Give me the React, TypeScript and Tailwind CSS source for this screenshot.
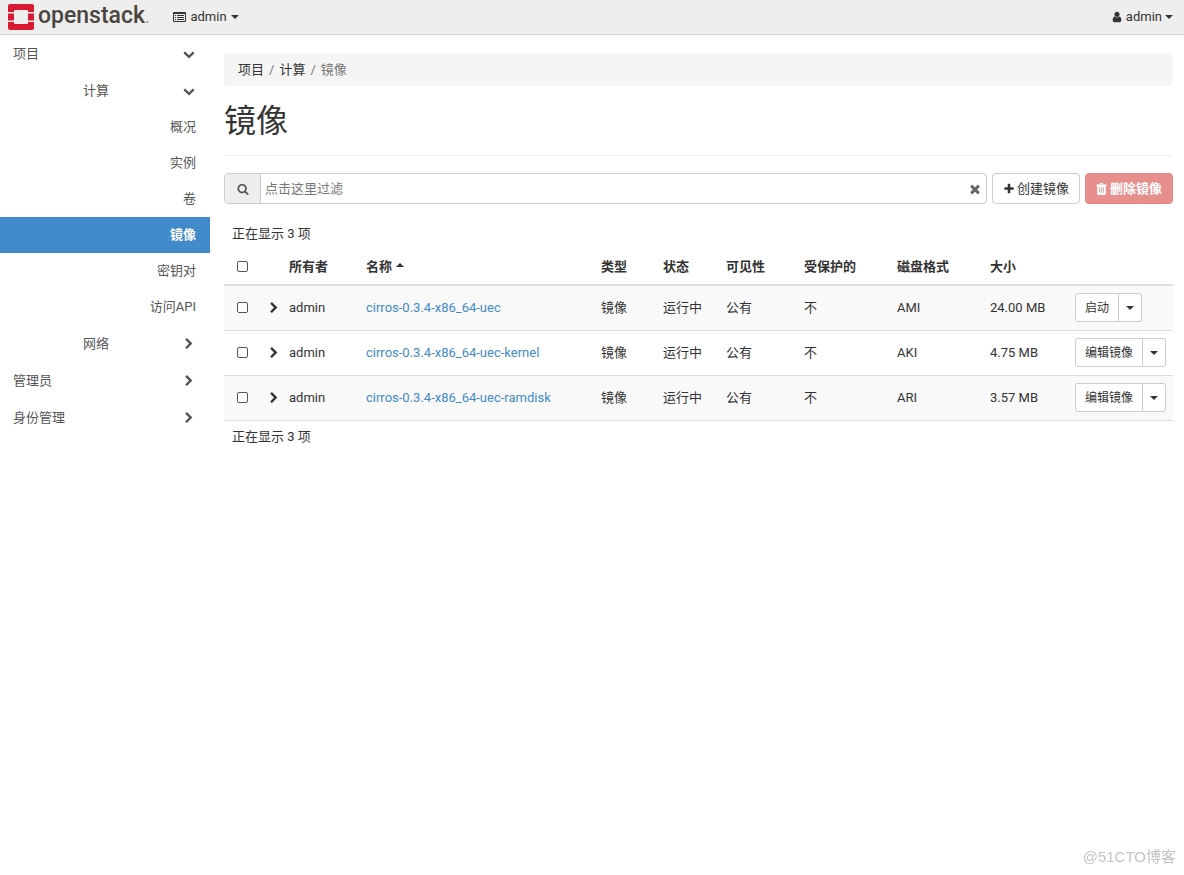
import type { ReactNode } from "react";

const CHEVRON_RIGHT =
    "M1363 877l-742 742q-19 19-45 19t-45-19l-166-166q-19-19-19-45t19-45l531-531-531-531q-19-19-19-45t19-45l166-166q19-19 45-19t45 19l742 742q19 19 19 45t-19 45z";
const CHEVRON_DOWN =
    "M1683 808l-742 741q-19 19-45 19t-45-19l-742-741q-19-19-19-45.5t19-45.5l166-165q19-19 45-19t45 19l531 531 531-531q19-19 45-19t45 19l166 165q19 19 19 45.5t-19 45.5z";
const SEARCH =
    "M1216 832q0-185-131.5-316.5t-316.5-131.5-316.5 131.5-131.5 316.5 131.5 316.5 316.5 131.5 316.5-131.5 131.5-316.5zm512 832q0 52-38 90t-90 38q-54 0-90-38l-343-342q-179 124-399 124-143 0-273.5-55.5t-225-150-150-225-55.5-273.5 55.5-273.5 150-225 225-150 273.5-55.5 273.5 55.5 225 150 150 225 55.5 273.5q0 220-124 399l343 343q37 37 37 90z";
const PLUS =
    "M1600 736v192q0 40-28 68t-68 28h-416v416q0 40-28 68t-68 28h-192q-40 0-68-28t-28-68v-416h-416q-40 0-68-28t-28-68v-192q0-40 28-68t68-28h416v-416q0-40 28-68t68-28h192q40 0 68 28t28 68v416h416q40 0 68 28t28 68z";
const TIMES =
    "M1490 1322q0 40-28 68l-136 136q-28 28-68 28t-68-28l-294-294-294 294q-28 28-68 28t-68-28l-136-136q-28-28-28-68t28-68l294-294-294-294q-28-28-28-68t28-68l136-136q28-28 68-28t68 28l294 294 294-294q28-28 68-28t68 28l136 136q28 28 28 68t-28 68l-294 294 294 294q28 28 28 68z";
const USER =
    "M1536 1399q0 109-62.5 187t-150.5 78h-854q-88 0-150.5-78t-62.5-187q0-85 8.5-160.5t31.5-152 58.5-131 94-89 134.5-34.5q131 128 313 128t313-128q76 0 134.5 34.5t94 89 58.5 131 31.5 152 8.5 160.5zm-256-887q0 159-112.5 271.5t-271.5 112.5-271.5-112.5-112.5-271.5 112.5-271.5 271.5-112.5 271.5 112.5 112.5 271.5z";

const Icon = ({ d, className = "size-3" }: { d: string; className?: string }) => (
    <svg viewBox="0 0 1792 1792" fill="currentColor" className={`shrink-0 ${className}`} aria-hidden="true">
        <path d={d} />
    </svg>
);

const Caret = ({ up = false }: { up?: boolean }) => (
    <svg viewBox="0 0 8 4" fill="currentColor" className="h-1 w-2 shrink-0" aria-hidden="true">
        <path d={up ? "M0 4L4 0L8 4Z" : "M0 0H8L4 4Z"} />
    </svg>
);

const ListIcon = () => (
    <svg viewBox="0 0 13 10" className="h-2.5 w-[13px] shrink-0" fill="currentColor" aria-hidden="true">
        <path
            fillRule="evenodd"
            d="M1 0H12Q13 0 13 1V9Q13 10 12 10H1Q0 10 0 9V1Q0 0 1 0ZM1 2V9H12V2Z"
        />
        <path d="M2 3h1v1H2zM4 3h7v1H4zM2 5h1v1H2zM4 5h7v1H4zM2 7h1v1H2zM4 7h7v1H4z" />
    </svg>
);

const TrashIcon = () => (
    <svg viewBox="0 0 11 12" className="h-3 w-[11px] shrink-0" fill="currentColor" aria-hidden="true">
        <path
            fillRule="evenodd"
            d="M3.5 1.6L4 .5Q4.2 0 4.8 0H6.2Q6.8 0 7 .5L7.5 1.6H10.6V3H9.8V10.6Q9.8 12 8.5 12H2.5Q1.2 12 1.2 10.6V3H.4V1.6ZM4.5 1.6H6.5L6.2 .9H4.8ZM3.2 4.3V9.8H4V4.3ZM5.1 4.3V9.8H5.9V4.3ZM7 4.3V9.8H7.8V4.3Z"
        />
    </svg>
);

const Logo = () => (
    <a href="#" className="flex items-center gap-1" aria-label="openstack">
        <svg viewBox="0 0 26 26" className="size-[26px]" fill="#da1a32" aria-hidden="true">
            <path d="M2 0H24Q26 0 26 2V8H20V7Q20 6 19 6H7Q6 6 6 7V8H0V2Q0 0 2 0Z" />
            <path d="M0 9.5H6V16.5H0ZM20 9.5H26V16.5H20Z" />
            <path d="M0 18H6V19Q6 20 7 20H19Q20 20 20 19V18H26V24Q26 26 24 26H2Q0 26 0 24Z" />
        </svg>
        <span className="flex items-end pb-0.5 text-[23px] leading-7 font-medium text-[#4b4540]">
            openstack<span className="text-base leading-6 text-[#a09c99]">.</span>
        </span>
    </a>
);

const NavGroup = ({ label, open = false, nested = false }: { label: string; open?: boolean; nested?: boolean }) => (
    <button
        type="button"
        aria-expanded={open}
        className={`flex h-[37px] w-full items-center justify-between pr-[15px] ${nested ? "pl-[83px]" : "pl-[13px]"}`}
    >
        {label}
        <Icon d={open ? CHEVRON_DOWN : CHEVRON_RIGHT} />
    </button>
);

const panels = ["概况", "实例", "卷", "镜像", "密钥对", "访问API"];

const SideBar = () => (
    <nav className="w-[210px] shrink-0 text-[#555]">
        <NavGroup label="项目" open />
        <NavGroup label="计算" open nested />
        <ul>
            {panels.map((panel) => (
                <li key={panel}>
                    <a
                        href="#"
                        className={`flex h-9 items-center justify-end pr-3.5 ${
                            panel === "镜像" ? "bg-[#428bca] font-bold text-white" : ""
                        }`}
                    >
                        {panel}
                    </a>
                </li>
            ))}
        </ul>
        <NavGroup label="网络" nested />
        <NavGroup label="管理员" />
        <NavGroup label="身份管理" />
    </nav>
);

const images = [
    { name: "cirros-0.3.4-x86_64-uec", format: "AMI", size: "24.00 MB", action: "启动" },
    { name: "cirros-0.3.4-x86_64-uec-kernel", format: "AKI", size: "4.75 MB", action: "编辑镜像" },
    { name: "cirros-0.3.4-x86_64-uec-ramdisk", format: "ARI", size: "3.57 MB", action: "编辑镜像" },
];

const CheckBox = ({ label }: { label: string }) => (
    <input
        type="checkbox"
        aria-label={label}
        className="block size-[11px] appearance-none rounded-xs border border-[#555] bg-white checked:bg-[#428bca]"
    />
);

const Th = ({ children }: { children?: ReactNode }) => <th className="px-2 text-left font-bold">{children}</th>;
const Td = ({ children }: { children?: ReactNode }) => <td className="px-2">{children}</td>;

const ImageTable = () => (
    <table className="w-full table-fixed border-collapse whitespace-nowrap">
        <colgroup>
            <col className="w-[41px]" />
            <col className="w-4" />
            <col className="w-[77px]" />
            <col />
            <col className="w-[62px]" />
            <col className="w-[63px]" />
            <col className="w-[78px]" />
            <col className="w-[93px]" />
            <col className="w-[93px]" />
            <col className="w-[85px]" />
            <col className="w-[106px]" />
        </colgroup>
        <thead>
            <tr className="h-9 border-b-2 border-[#ddd]">
                <th className="pl-[13px]">
                    <CheckBox label="全选" />
                </th>
                <Th />
                <Th>所有者</Th>
                <Th>
                    <span className="flex items-center gap-1">
                        名称
                        <span className="pb-1">
                            <Caret up />
                        </span>
                    </span>
                </Th>
                <Th>类型</Th>
                <Th>状态</Th>
                <Th>可见性</Th>
                <Th>受保护的</Th>
                <Th>磁盘格式</Th>
                <Th>大小</Th>
                <Th />
            </tr>
        </thead>
        <tbody>
            {images.map((image) => (
                <tr key={image.name} className="h-[45px] border-b border-[#ddd] odd:bg-[#f9f9f9]">
                    <td className="pl-[13px]">
                        <CheckBox label={image.name} />
                    </td>
                    <td>
                        <button type="button" aria-label="详情" className="flex pl-[3px]">
                            <Icon d={CHEVRON_RIGHT} />
                        </button>
                    </td>
                    <Td>admin</Td>
                    <Td>
                        <a href="#" className="text-[#428bca]">
                            {image.name}
                        </a>
                    </Td>
                    <Td>镜像</Td>
                    <Td>运行中</Td>
                    <Td>公有</Td>
                    <Td>不</Td>
                    <Td>{image.format}</Td>
                    <Td>{image.size}</Td>
                    <Td>
                        <div className="flex">
                            <button
                                type="button"
                                className="h-[29px] rounded-l-[3px] border border-[#ccc] bg-white px-[9px] text-xs"
                            >
                                {image.action}
                            </button>
                            <button
                                type="button"
                                aria-label="更多"
                                className="flex h-[29px] items-center rounded-r-[3px] border border-l-0 border-[#ccc] bg-white px-[7px]"
                            >
                                <Caret />
                            </button>
                        </div>
                    </Td>
                </tr>
            ))}
        </tbody>
    </table>
);

export default function App() {
    return (
        <div className="min-h-screen bg-white font-[Roboto,'Noto_Sans_CJK_SC',sans-serif] text-[13px] leading-[18px] text-[#333]">
            <header className="flex h-[35px] items-center border-b border-[#d5d5d5] bg-[#eee] pr-[11px] pl-2">
                <Logo />
                <button type="button" className="ml-6 flex items-center gap-1">
                    <ListIcon />
                    admin
                    <Caret />
                </button>
                <button type="button" className="ml-auto flex items-center gap-[3px]">
                    <Icon d={USER} />
                    admin
                    <Caret />
                </button>
            </header>
            <div className="flex">
                <SideBar />
                <main className="min-w-0 grow pt-[18px] pr-[11px] pl-3.5">
                    <ol className="flex h-[33px] items-center rounded bg-[#f5f5f5] px-3.5">
                        <li>
                            <a href="#">项目</a>
                            <span className="px-[5px] text-[#777]">/</span>
                        </li>
                        <li>
                            <a href="#">计算</a>
                            <span className="px-[5px] text-[#777]">/</span>
                        </li>
                        <li className="text-[#777]">镜像</li>
                    </ol>
                    <h1 className="border-b border-[#eee] pt-[17px] pb-[15px] text-[32px] leading-[37px]">镜像</h1>
                    <div className="flex gap-[5px] pt-[17px]">
                        <div className="flex h-[31px] grow items-center overflow-hidden rounded border border-[#ccc]">
                            <label
                                htmlFor="filter"
                                className="flex h-full w-9 items-center justify-center border-r border-[#ccc] bg-[#eee] text-[#555]"
                            >
                                <Icon d={SEARCH} />
                            </label>
                            <input
                                id="filter"
                                type="text"
                                placeholder="点击这里过滤"
                                className="h-full min-w-0 grow px-1 outline-none placeholder:text-[#777]"
                            />
                            <button type="button" aria-label="清除" className="px-1 text-[#666]">
                                <Icon d={TIMES} className="size-3.5" />
                            </button>
                        </div>
                        <button
                            type="button"
                            className="flex h-[31px] items-center gap-0.5 rounded border border-[#ccc] px-2.5"
                        >
                            <Icon d={PLUS} />
                            创建镜像
                        </button>
                        <button
                            type="button"
                            disabled
                            className="flex h-[31px] items-center gap-[3px] rounded border border-[#e58684] bg-[#e78f8d] px-2.5 font-bold text-white"
                        >
                            <TrashIcon />
                            删除镜像
                        </button>
                    </div>
                    <p className="px-2 pt-[21px] pb-1.5">正在显示 3 项</p>
                    <ImageTable />
                    <p className="px-2 pt-[7px]">正在显示 3 项</p>
                </main>
            </div>
            <p className="fixed right-2 bottom-2 font-['Liberation_Sans','Noto_Sans_CJK_SC',sans-serif] text-[15px] leading-5 text-[#c4c4c4]">
                @51CTO博客
            </p>
        </div>
    );
}
